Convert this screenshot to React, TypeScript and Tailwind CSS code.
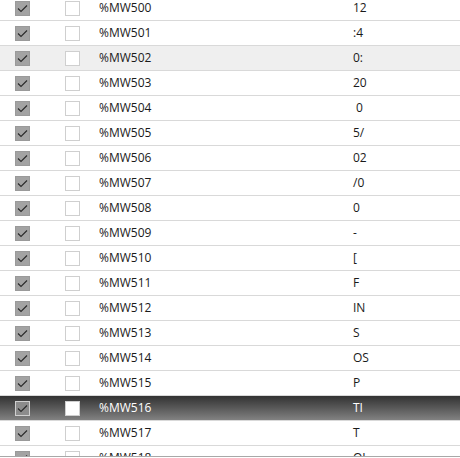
import React from 'react';

type Row = { addr: string; value: string };

const rows: Row[] = [
  { addr: '%MW500', value: '12' },
  { addr: '%MW501', value: ':4' },
  { addr: '%MW502', value: '0:' },
  { addr: '%MW503', value: '20' },
  { addr: '%MW504', value: '\u00a00' },
  { addr: '%MW505', value: '5/' },
  { addr: '%MW506', value: '02' },
  { addr: '%MW507', value: '/0' },
  { addr: '%MW508', value: '0' },
  { addr: '%MW509', value: '-' },
  { addr: '%MW510', value: '[' },
  { addr: '%MW511', value: 'F' },
  { addr: '%MW512', value: 'IN' },
  { addr: '%MW513', value: 'S' },
  { addr: '%MW514', value: 'OS' },
  { addr: '%MW515', value: 'P' },
  { addr: '%MW516', value: 'TI' },
  { addr: '%MW517', value: 'T' },
  { addr: '%MW518', value: 'OI' },
];

const HOVER = 2;
const SELECTED = 16;

const CheckedBox: React.FC<{ selected: boolean }> = ({ selected }) => (
  <div
    className={`w-[15px] h-[15px] flex items-center justify-center border ${
      selected ? 'bg-[#8c8c8c] border-[#d0d0d0]' : 'bg-[#a3a3a3] border-[#9a9a9a]'
    }`}
  >
    <svg width="11" height="9" viewBox="0 0 11 9" fill="none">
      <path d="M1 4.5 L4 7.5 L10 1.5" stroke="#2a2a2a" strokeWidth="1.1" />
    </svg>
  </div>
);

const EmptyBox: React.FC = () => (
  <div className="w-[15px] h-[15px] bg-white border border-[#cfcfcf]" />
);

export default function App() {
  return (
    <div className="w-[460px] h-[457px] overflow-hidden bg-white border-b border-[#a8a8a8] font-['Segoe_UI','Open_Sans',sans-serif] text-[12px]">
      <div className="-mt-[4px]">
        {rows.map((r, i) => {
          const selected = i === SELECTED;
          const rowBg = selected
            ? 'bg-gradient-to-b from-[#333333] to-[#828282] text-white'
            : i === HOVER
            ? 'bg-[#efefef] text-[#1a1a1a]'
            : 'bg-white text-[#1a1a1a]';
          return (
            <div key={r.addr} className={`h-[25px] flex items-center border-b border-[#d9d9d9] ${rowBg}`}>
              <div className="w-[15px] shrink-0" />
              <CheckedBox selected={selected} />
              <div className="w-[35px] shrink-0" />
              <EmptyBox />
              <div className="w-[19px] shrink-0" />
              <div className="w-[254px] shrink-0 whitespace-pre">{r.addr}</div>
              <div className="whitespace-pre">{r.value}</div>
            </div>
          );
        })}
      </div>
    </div>
  );
}
